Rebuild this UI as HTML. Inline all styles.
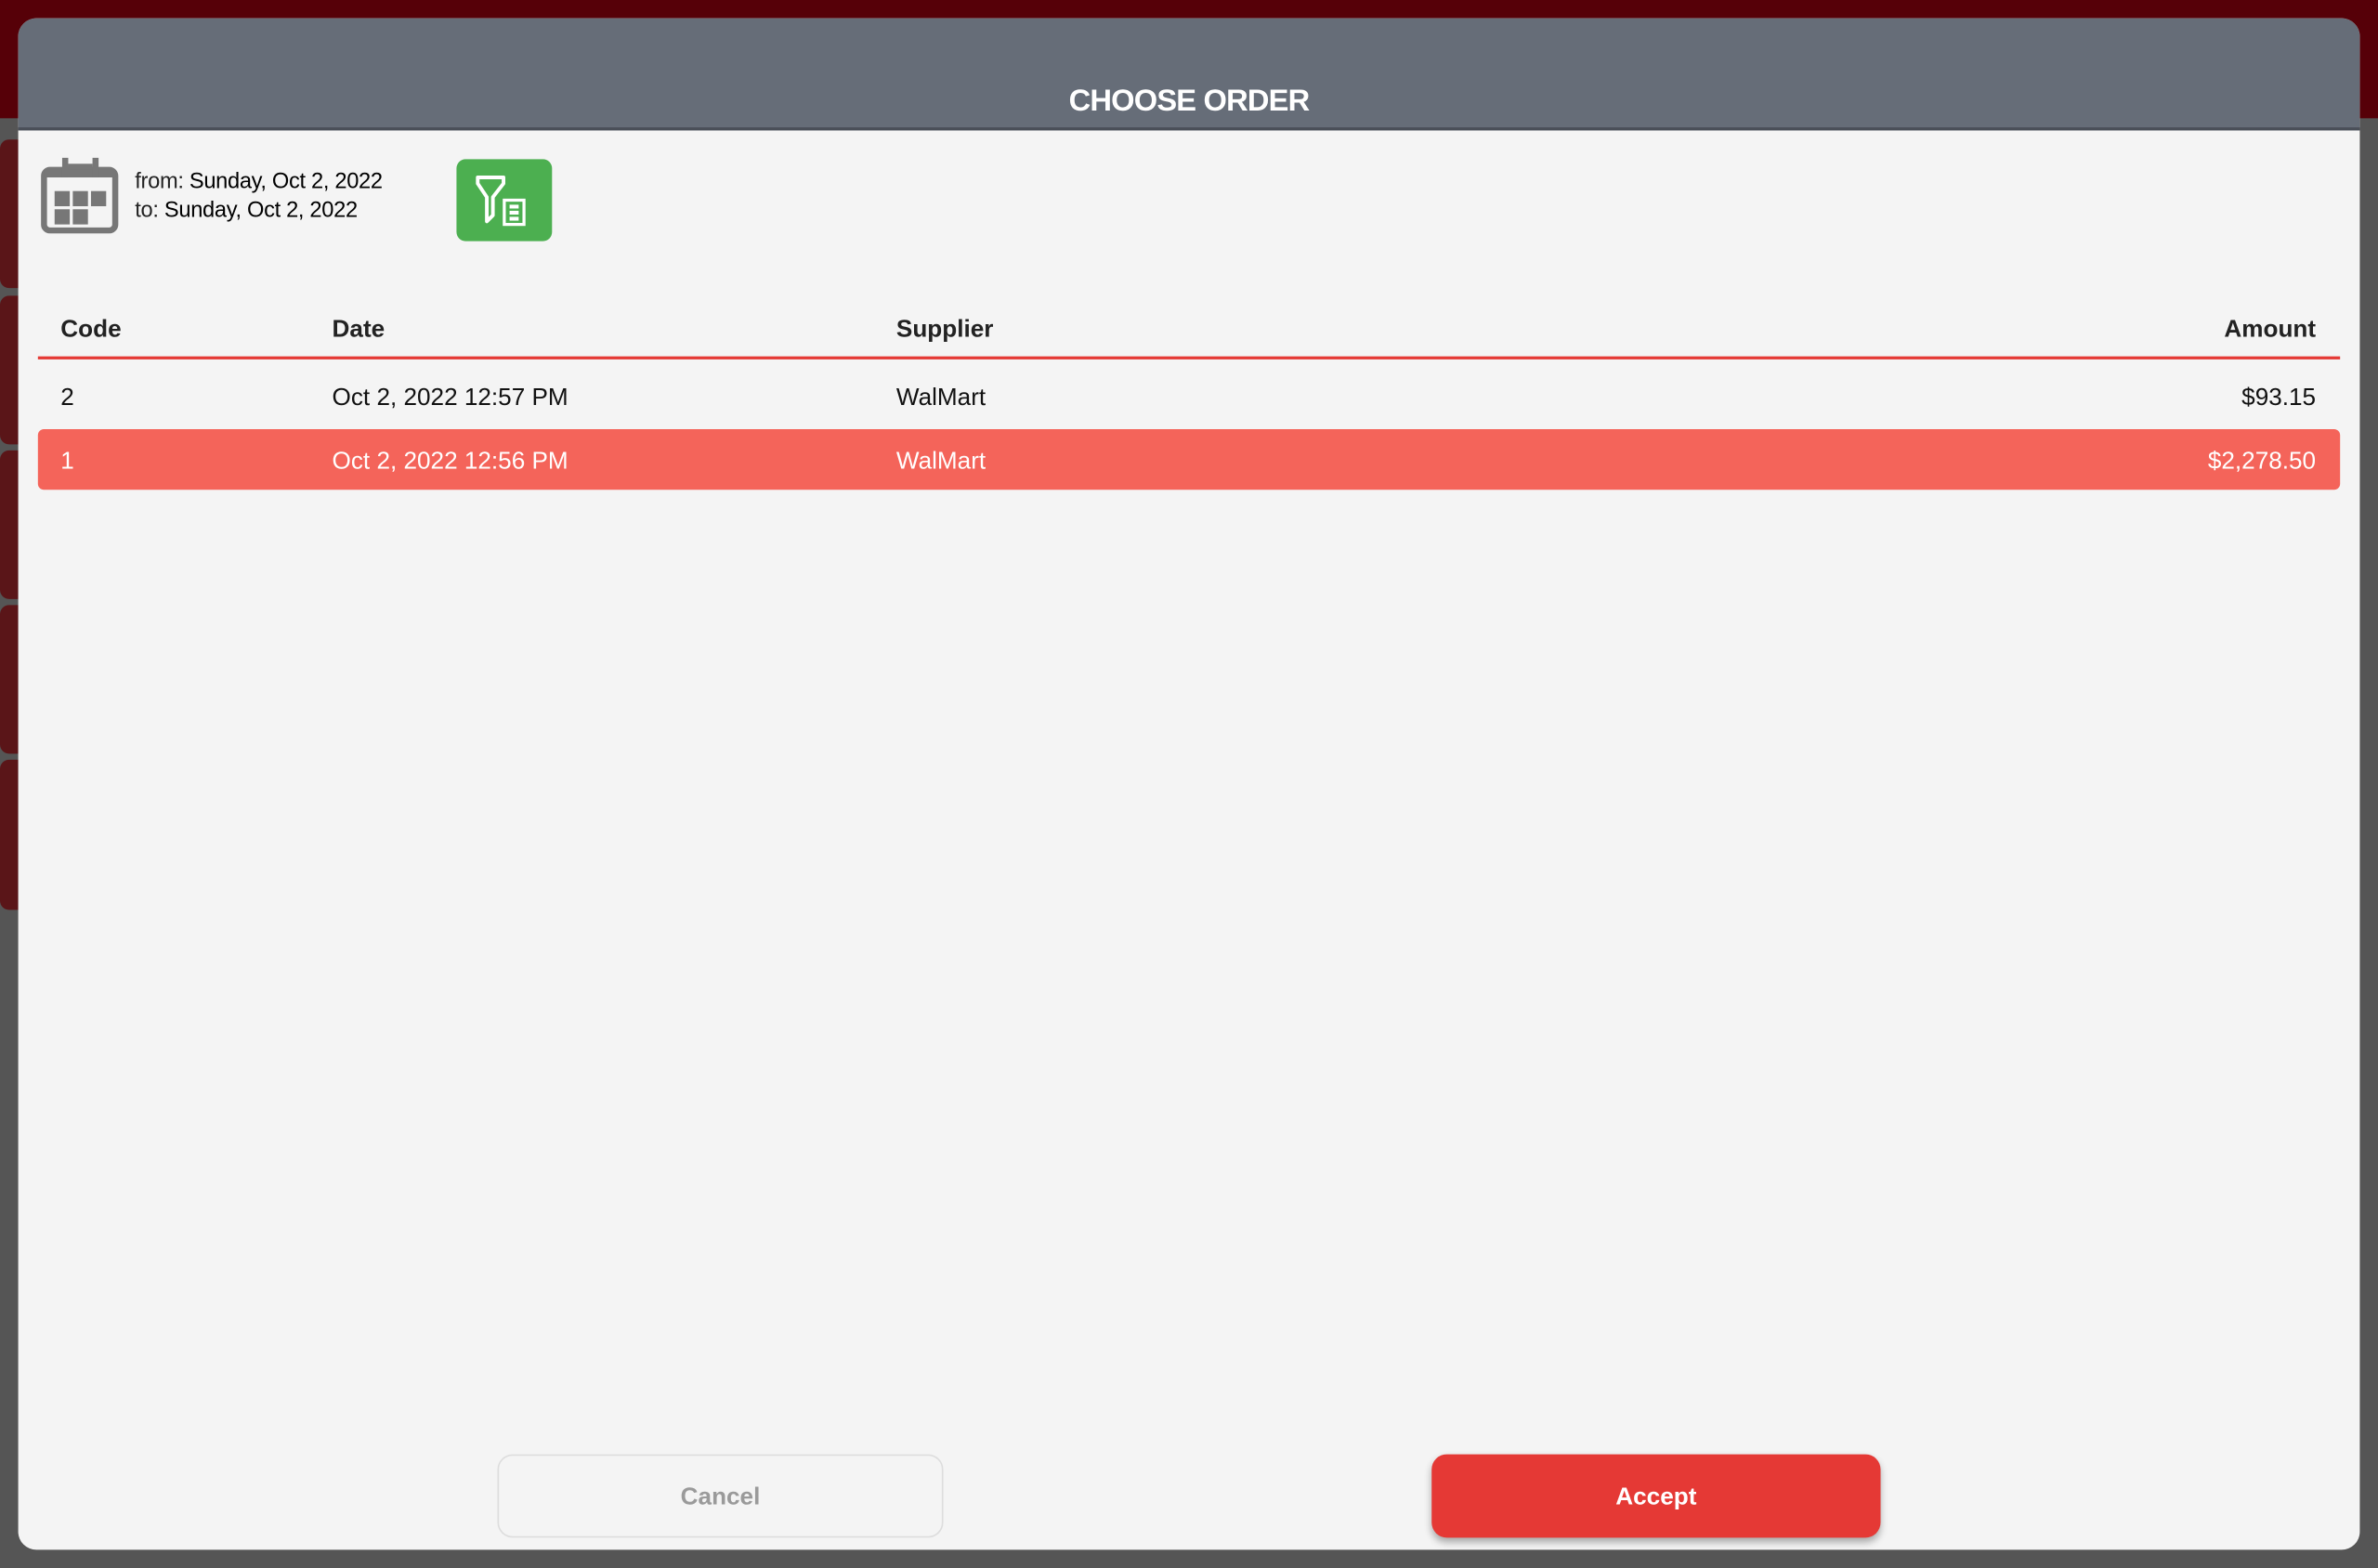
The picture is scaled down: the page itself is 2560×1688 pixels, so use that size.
<!DOCTYPE html>
<html><head><meta charset="utf-8"><style>
html,body{margin:0;padding:0;width:2560px;height:1688px;overflow:hidden;background:#555;font-family:"Liberation Sans",sans-serif}
#w{position:absolute;left:0;top:0;width:1568px;height:1034px;transform:scale(1.63266,1.63250);transform-origin:0 0}
.a{position:absolute}
.card{position:absolute;left:0;width:12px;background:#5a1518;border-radius:6px 0 0 6px}
</style></head><body><div id="w">
<div class="a" style="left:0;top:0;width:1568px;height:78px;background:#560008"></div>
<div class="card" style="top:92px;height:98px"></div>
<div class="card" style="top:195px;height:98px"></div>
<div class="card" style="top:297px;height:98px"></div>
<div class="card" style="top:399px;height:98px"></div>
<div class="card" style="top:501px;height:99px"></div>
<div class="a" style="left:12px;top:12px;width:1544px;height:1010px;background:#f4f4f4;border-radius:12px;overflow:hidden">
 <div class="a" style="left:0;top:0;width:1544px;height:72px;background:#666d78;border-bottom:2px solid #4a4f58"></div>
 <div class="a" style="left:0;top:44px;width:1544px;text-align:center;color:#fff;font-weight:bold;font-size:20px;letter-spacing:-0.5px">CHOOSE ORDER</div>
 <svg class="a" style="left:15px;top:92px" width="52" height="50" viewBox="0 0 52 50">
  <rect x="2" y="8" width="47" height="40" rx="4" fill="none" stroke="#777" stroke-width="4"/>
  <rect x="2" y="8" width="47" height="5" fill="#777"/>
  <rect x="14" y="0" width="4" height="13" fill="#777"/><rect x="34" y="0" width="4" height="13" fill="#777"/>
  <rect x="18" y="4" width="16" height="4" fill="#777"/>
  <rect x="9" y="22" width="10" height="10" fill="#777"/><rect x="21" y="22" width="10" height="10" fill="#777"/><rect x="33" y="22" width="10" height="10" fill="#777"/>
  <rect x="9" y="34" width="10" height="10" fill="#777"/><rect x="21" y="34" width="10" height="10" fill="#777"/>
 </svg>
 <div class="a" style="left:77px;top:99px;font-size:14.5px;color:#222;line-height:19px;letter-spacing:-0.2px">from: <span style="color:#000">Sunday, Oct 2, 2022</span><br>to: <span style="color:#000">Sunday, Oct 2, 2022</span></div>
 <div class="a" style="left:289px;top:93px;width:63px;height:54px;background:#4caf50;border-radius:6px">
  <svg width="63" height="54" viewBox="0 0 63 54"><path d="M14 12h17v4l-7 9v12l-4 4V25l-6-9z" fill="none" stroke="#fff" stroke-width="2.4" stroke-linejoin="round"/><rect x="31.5" y="27" width="13" height="16" fill="none" stroke="#fff" stroke-width="2"/><rect x="35" y="30" width="6" height="2.5" fill="#fff"/><rect x="35" y="34" width="6" height="2.5" fill="#fff"/><rect x="35" y="38" width="6" height="2.5" fill="#fff"/></svg>
 </div>
 <div class="a" style="top:197px;left:28px;font-weight:bold;font-size:16px;color:#222">Code</div>
 <div class="a" style="top:197px;left:207px;font-weight:bold;font-size:16px;color:#222">Date</div>
 <div class="a" style="top:197px;left:579px;font-weight:bold;font-size:16px;color:#222">Supplier</div>
 <div class="a" style="top:197px;right:29px;font-weight:bold;font-size:16px;color:#222">Amount</div>
 <div class="a" style="top:223px;left:13px;width:1518px;height:2px;background:#e53935"></div>
 <div class="a" style="top:242px;left:28px;font-size:16px;color:#111">2</div>
 <div class="a" style="top:242px;left:207px;font-size:16px;color:#111">Oct 2, 2022 12:57 PM</div>
 <div class="a" style="top:242px;left:579px;font-size:16px;color:#111">WalMart</div>
 <div class="a" style="top:242px;right:29px;font-size:16px;color:#111">$93.15</div>
 <div class="a" style="top:271px;left:13px;width:1518px;height:40px;background:#f4645a;border-radius:4px"></div>
 <div class="a" style="top:284px;left:28px;font-size:16px;color:#fff">1</div>
 <div class="a" style="top:284px;left:207px;font-size:16px;color:#fff">Oct 2, 2022 12:56 PM</div>
 <div class="a" style="top:284px;left:579px;font-size:16px;color:#fff">WalMart</div>
 <div class="a" style="top:284px;right:29px;font-size:16px;color:#fff">$2,278.50</div>
 <div class="a" style="left:316px;top:947px;width:294px;height:55px;border:1px solid #ddd;border-radius:10px;box-sizing:border-box;text-align:center;line-height:56px;color:#9a9a9a;font-weight:bold;font-size:16px">Cancel</div>
 <div class="a" style="left:932px;top:947px;width:296px;height:55px;background:#e53935;border-radius:10px;text-align:center;line-height:57px;color:#fff;font-weight:bold;font-size:16px;box-shadow:0 3px 5px rgba(0,0,0,.3)">Accept</div>
</div>
</div></body></html>
